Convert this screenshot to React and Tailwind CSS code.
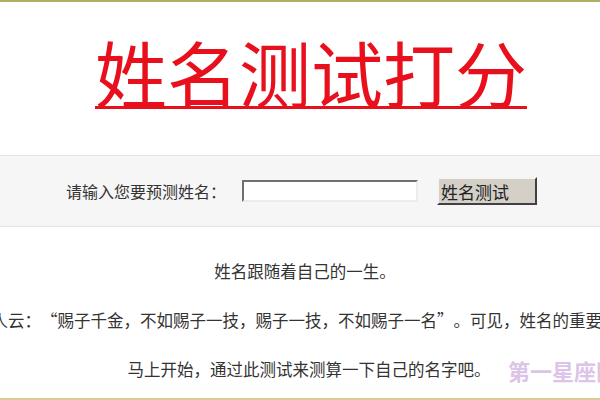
import React from "react";

const font = "font-['Noto_Sans_CJK_SC','Noto_Sans',sans-serif]";

// full-width curly quotes (the font draws them narrow)
const OpenQ = () => <span className="inline-block w-[1em] text-right">“</span>;
const CloseQ = () => <span className="inline-block w-[1em] text-left">”</span>;

export default function App() {
  return (
    <div
      className={`relative w-[600px] h-[400px] overflow-hidden bg-white border-t-2 border-t-[#b0ae62] border-b-2 border-b-[#d8cb93] ${font}`}
    >
      {/* title */}
      <div className="h-[153px] pt-[34px] flex justify-center items-start">
        <div className="ml-[22px] h-[73px] text-[72px] leading-[70px] text-[#e8101c] border-b-[3px] border-[#e8101c] whitespace-nowrap">
          姓名测试打分
        </div>
      </div>

      {/* form band */}
      <div className="h-[72px] border-y border-[#e3e3e3] bg-[#f6f6f6] flex items-center justify-center">
        <div className="ml-[3px] flex items-center">
          <span className="text-[16px] text-[#333] whitespace-nowrap">
            请输入您要预测姓名：
          </span>
          <input
            type="text"
            className="ml-[16px] w-[176px] h-[22px] bg-white border-2 border-t-[#707070] border-l-[#707070] border-b-[#ececec] border-r-[#ececec] outline-none"
          />
          <button className="ml-[19px] w-[100px] h-[28px] bg-[#d4d0c8] border-2 border-t-[#f4f4f4] border-l-[#f4f4f4] border-r-[#404040] border-b-[#404040] text-left pl-[2px] text-[17px] leading-none text-[#222]">
            姓名测试
          </button>
        </div>
      </div>

      {/* intro text */}
      <div className="pt-[20px] ml-[10px] text-[16.5px] leading-[49px] text-[#333]">
        <div className="flex justify-center whitespace-nowrap">
          <span>姓名跟随着自己的一生。</span>
        </div>
        <div className="flex justify-center whitespace-nowrap">
          <span>
            古人云：<OpenQ />赐子千金，不如赐子一技，赐子一技，不如赐子一名<CloseQ />。可见，姓名的重要性。
          </span>
        </div>
        <div className="flex justify-center whitespace-nowrap">
          <span className="ml-[8px]">
            马上开始，通过此测试来测算一下自己的名字吧。
          </span>
        </div>
      </div>

      {/* watermark */}
      <div className="absolute left-[508px] top-[357px] text-[22px] font-bold leading-none text-[#dcc3e8] whitespace-nowrap">
        第一星座网
      </div>
    </div>
  );
}
